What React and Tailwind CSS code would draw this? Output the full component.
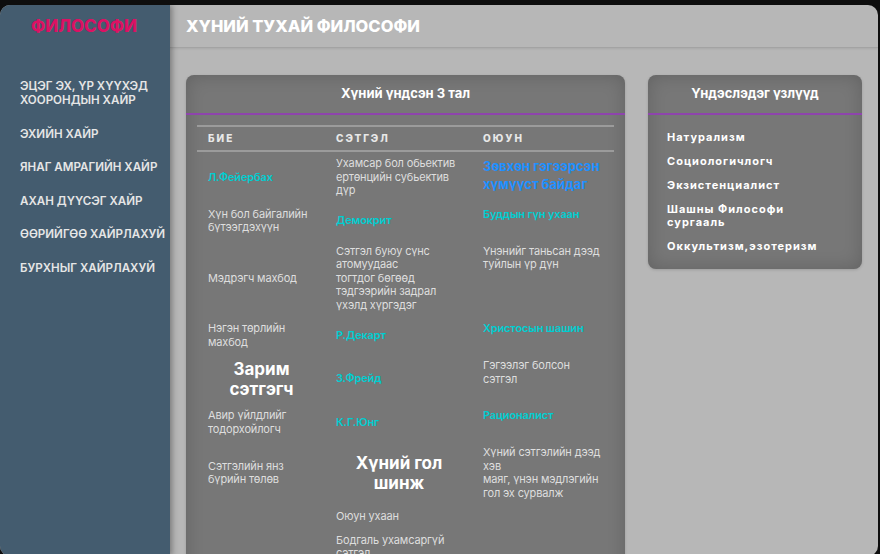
const navItems = [
  ["ЭЦЭГ ЭХ, ҮР ХҮҮХЭД", "ХООРОНДЫН ХАЙР"],
  ["ЭХИЙН ХАЙР"],
  ["ЯНАГ АМРАГИЙН ХАЙР"],
  ["АХАН ДҮҮСЭГ ХАЙР"],
  ["ӨӨРИЙГӨӨ ХАЙРЛАХУЙ"],
  ["БУРХНЫГ ХАЙРЛАХУЙ"],
];

const views = [
  ["Натурализм"],
  ["Социологичлогч"],
  ["Экзистенциалист"],
  ["Шашны Философи", "сургааль"],
  ["Оккультизм,эзотеризм"],
];

function Lines({ lines }) {
  return lines.map((l, i) => (
    <span key={i} className="block whitespace-nowrap">
      {l}
    </span>
  ));
}

function Cyan({ children }) {
  return <span className="text-[#00ced1] font-semibold">{children}</span>;
}

function Big({ lines }) {
  return (
    <div className="text-center text-white font-bold text-[17px] leading-[20px] tracking-normal pr-[21px]">
      <Lines lines={lines} />
    </div>
  );
}

const rows = [
  [
    <Cyan>Л.Фейербах</Cyan>,
    <Lines lines={["Ухамсар бол обьектив", "ертөнцийн субьектив", "дүр"]} />,
    <div className="text-[#1e90ff] font-bold text-[13px] leading-[18px] tracking-normal">
      <Lines lines={["Зөвхөн гэгээрсэн", "хүмүүст байдаг"]} />
    </div>,
  ],
  [
    <Lines lines={["Хүн бол байгалийн", "бүтээгдэхүүн"]} />,
    <Cyan>Демокрит</Cyan>,
    <Cyan>Буддын гүн ухаан</Cyan>,
  ],
  [
    <span>Мэдрэгч махбод</span>,
    <Lines
      lines={[
        "Сэтгэл буюу сүнс",
        "атомуудаас",
        "тогтдог бөгөөд",
        "тэдгээрийн задрал",
        "үхэлд хүргэдэг",
      ]}
    />,
    <Lines lines={["Үнэнийг таньсан дээд", "туйлын үр дүн"]} />,
  ],
  [
    <Lines lines={["Нэгэн төрлийн", "махбод"]} />,
    <Cyan>Р.Декарт</Cyan>,
    <Cyan>Христосын шашин</Cyan>,
  ],
  [
    <Big lines={["Зарим", "сэтгэгч"]} />,
    <Cyan>З.Фрейд</Cyan>,
    <Lines lines={["Гэгээлэг болсон", "сэтгэл"]} />,
  ],
  [
    <Lines lines={["Авир үйлдлийг", "тодорхойлогч"]} />,
    <Cyan>К.Г.Юнг</Cyan>,
    <Cyan>Рационалист</Cyan>,
  ],
  [
    <Lines lines={["Сэтгэлийн янз", "бүрийн төлөв"]} />,
    <Big lines={["Хүний гол", "шинж"]} />,
    <Lines
      lines={[
        "Хүний сэтгэлийн дээд",
        "хэв",
        "маяг, үнэн мэдлэгийн",
        "гол эх сурвалж",
      ]}
    />,
  ],
  [null, <span>Оюун ухаан</span>, null],
  [null, <Lines lines={["Бодгаль ухамсаргүй", "сэтгэл"]} />, null],
];

export default function App() {
  return (
    <div
      className="w-[880px] h-[554px] overflow-hidden bg-[#0e0e0e] pt-[5px] pr-[2px]"
      style={{ fontFamily: "Inter, 'Noto Sans', sans-serif" }}
    >
      <div className="flex h-[551px] rounded-[10px] overflow-hidden bg-[#b7b7b7]">
        <aside className="relative z-10 w-[170px] shrink-0 bg-[#445c6f] shadow-[2px_0_6px_rgba(0,0,0,0.35)]">
          <div className="h-[43px] flex items-center justify-center pr-[2px] text-[#dc1163] font-extrabold text-[17px]">
            ФИЛОСОФИ
          </div>
          <nav className="flex flex-col gap-[19.5px] pt-[31px] pl-[20px] text-[#e6e6e6] text-[11.6px] font-semibold leading-[14px]">
            {navItems.map((item, i) => (
              <a key={i} className="block">
                <Lines lines={item} />
              </a>
            ))}
          </nav>
        </aside>

        <main className="flex-1 flex flex-col min-w-0">
          <header className="h-[43px] shrink-0 flex items-center pl-[16px] pt-[1px] border-b border-[#a3a3a3] shadow-[0_1px_2px_rgba(0,0,0,0.08)]">
            <h1 className="text-white font-extrabold text-[16.5px]">ХҮНИЙ ТУХАЙ ФИЛОСОФИ</h1>
          </header>

          <div className="flex items-start gap-[23px] pl-[16px] pt-[27px]">
            <section className="w-[439px] shrink-0 rounded-[8px] bg-[#777777] shadow-[inset_0_0_18px_rgba(0,0,0,0.18),0_1px_3px_rgba(0,0,0,0.15)] pb-4">
              <div className="h-[38px] flex items-center justify-center text-white font-bold text-[13px]">
                Хүний үндсэн 3 тал
              </div>
              <div className="h-[2px] bg-[#8e44ad]" />
              <div className="px-[11px] pt-[10px]">
                <table className="w-full table-fixed border-collapse text-[11px] leading-[13.5px] tracking-[-0.15px] text-[#dedede]">
                  <thead>
                    <tr className="border-t-2 border-b-2 border-[#9b9b9b]">
                      <th className="w-[139px] pl-[11px] h-[25px] text-left text-[10px] font-extrabold tracking-[2px] text-[#e8e8e8]">
                        БИЕ
                      </th>
                      <th className="w-[147px] text-left text-[10px] font-extrabold tracking-[2px] text-[#e8e8e8]">
                        СЭТГЭЛ
                      </th>
                      <th className="text-left text-[10px] font-extrabold tracking-[2px] text-[#e8e8e8]">
                        ОЮУН
                      </th>
                    </tr>
                  </thead>
                  <tbody>
                    {rows.map((r, i) => (
                      <tr key={i}>
                        <td className="pl-[11px] py-[5px] align-middle">{r[0]}</td>
                        <td className="py-[5px] align-middle">{r[1]}</td>
                        <td className="py-[5px] align-top">{r[2]}</td>
                      </tr>
                    ))}
                  </tbody>
                </table>
              </div>
            </section>

            <section className="w-[214px] shrink-0 rounded-[8px] bg-[#777777] shadow-[inset_0_0_18px_rgba(0,0,0,0.18),0_1px_3px_rgba(0,0,0,0.15)] pb-[16px]">
              <div className="h-[38px] flex items-center justify-center text-white font-bold text-[13px]">
                Үндэслэдэг үзлүүд
              </div>
              <div className="h-[2px] bg-[#8e44ad]" />
              <ul className="flex flex-col gap-[11px] pt-[16px] pl-[19px] text-white font-bold text-[11px] leading-[13px] tracking-[1px]">
                {views.map((v, i) => (
                  <li key={i}>
                    <Lines lines={v} />
                  </li>
                ))}
              </ul>
            </section>
          </div>
        </main>
      </div>
    </div>
  );
}
